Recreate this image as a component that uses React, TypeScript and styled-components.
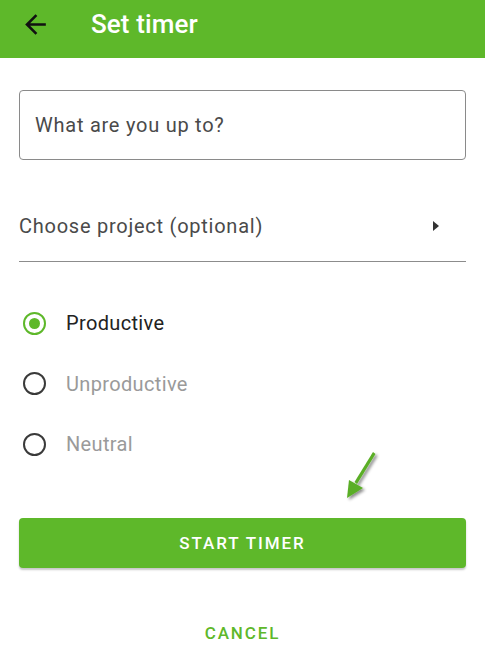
import React, { useState } from "react";
import styled, { createGlobalStyle } from "styled-components";

const Green = "#5eb82a";

const GlobalStyle = createGlobalStyle`
  html, body {
    margin: 0;
    padding: 0;
    background: #ffffff;
    font-family: Roboto, "Noto Sans", "Liberation Sans", sans-serif;
  }
  * {
    box-sizing: border-box;
  }
`;

const Page = styled.div`
  position: relative;
  width: 485px;
  height: 670px;
  display: flex;
  flex-direction: column;
  background: #fff;
`;

const AppBar = styled.header`
  height: 58px;
  background: ${Green};
  display: flex;
  align-items: center;
  padding: 0 0 10px 19px;
  gap: 40px;
`;

const BackButton = styled.button`
  border: none;
  background: transparent;
  padding: 0;
  width: 32px;
  height: 32px;
  display: flex;
  align-items: center;
  justify-content: center;
  color: #111;
  cursor: pointer;
`;

const Title = styled.h1`
  margin: 0;
  color: #fff;
  font-size: 26px;
  font-weight: 500;
  letter-spacing: 0.1px;
`;

const Content = styled.main`
  display: flex;
  flex-direction: column;
  padding: 0 19px;
`;

const TaskInput = styled.input`
  margin-top: 32px;
  height: 70px;
  width: 100%;
  border: 1px solid #8a8a8a;
  border-radius: 4px;
  padding: 0 15px;
  font-family: inherit;
  font-size: 20px;
  letter-spacing: 0.75px;
  color: #444;
  outline: none;

  &::placeholder {
    color: #4a4a4a;
  }
`;

const ProjectRow = styled.div`
  margin-top: 41px;
  height: 61px;
  padding-bottom: 10px;
  border-bottom: 1px solid #8c8c8c;
  display: flex;
  align-items: center;
  justify-content: space-between;
  font-size: 20px;
  color: #4a4a4a;
  letter-spacing: 0.75px;
`;

const Caret = styled.span`
  width: 0;
  height: 0;
  margin-right: 27px;
  border-top: 5px solid transparent;
  border-bottom: 5px solid transparent;
  border-left: 6px solid #333;
`;

const RadioGroup = styled.div`
  margin-top: 31px;
  display: flex;
  flex-direction: column;
`;

const RadioRow = styled.label`
  height: 60.5px;
  display: flex;
  align-items: center;
  gap: 20px;
  padding-left: 4px;
  cursor: pointer;
`;

const RadioCircle = styled.span<{ $checked: boolean }>`
  width: 23px;
  height: 23px;
  border-radius: 50%;
  border: 2.5px solid ${(p) => (p.$checked ? Green : "#3a3a3a")};
  display: flex;
  align-items: center;
  justify-content: center;

  &::after {
    content: "";
    width: 11px;
    height: 11px;
    border-radius: 50%;
    background: ${Green};
    display: ${(p) => (p.$checked ? "block" : "none")};
  }
`;

const RadioLabel = styled.span<{ $checked: boolean }>`
  font-size: 20px;
  color: ${(p) => (p.$checked ? "#222" : "#9a9a9a")};
  letter-spacing: 0.35px;
`;

const PrimaryButton = styled.button`
  margin-top: 43px;
  height: 50px;
  width: 100%;
  border: none;
  border-radius: 4px;
  background: ${Green};
  color: #fff;
  font-family: inherit;
  font-size: 17px;
  font-weight: 500;
  letter-spacing: 1.9px;
  box-shadow: 0 2px 2px rgba(0, 0, 0, 0.22);
  cursor: pointer;
`;

const TextButton = styled.button`
  margin-top: 40px;
  height: 50px;
  width: 100%;
  border: none;
  background: transparent;
  color: ${Green};
  font-family: inherit;
  font-size: 17px;
  font-weight: 500;
  letter-spacing: 1.9px;
  cursor: pointer;
`;

const Annotation = styled.svg`
  position: absolute;
  left: 338px;
  top: 446px;
  overflow: visible;
`;

const options = ["Productive", "Unproductive", "Neutral"];

const App = () => {
  const [selected, setSelected] = useState("Productive");

  return (
    <>
      <GlobalStyle />
      <Page>
        <AppBar>
          <BackButton aria-label="Back">
            <svg width="31" height="31" viewBox="0 0 24 24" fill="currentColor">
              <path d="M20 11H7.83l5.59-5.59L12 4l-8 8 8 8 1.41-1.41L7.83 13H20v-2z" />
            </svg>
          </BackButton>
          <Title>Set timer</Title>
        </AppBar>
        <Content>
          <TaskInput placeholder="What are you up to?" />
          <ProjectRow>
            <span>Choose project (optional)</span>
            <Caret />
          </ProjectRow>
          <RadioGroup>
            {options.map((o) => (
              <RadioRow key={o} onClick={() => setSelected(o)}>
                <RadioCircle $checked={selected === o} />
                <RadioLabel $checked={selected === o}>{o}</RadioLabel>
              </RadioRow>
            ))}
          </RadioGroup>
          <PrimaryButton>START TIMER</PrimaryButton>
          <TextButton>CANCEL</TextButton>
        </Content>
        {/* pointer drawn over the screenshot */}
        <Annotation width="44" height="60" viewBox="0 0 44 60">
          <defs>
            <filter id="shadow" x="-50%" y="-50%" width="200%" height="200%">
              <feDropShadow dx="2" dy="2" stdDeviation="1.5" floodColor="#000" floodOpacity="0.45" />
            </filter>
          </defs>
          <g filter="url(#shadow)" fill="#5aae25" stroke="none">
            <path d="M35 6 L37.5 8 L19 38 L16.5 36 Z" />
            <path d="M9 52 L11 34 L25 42 Z" />
          </g>
        </Annotation>
      </Page>
    </>
  );
};

export default App;
